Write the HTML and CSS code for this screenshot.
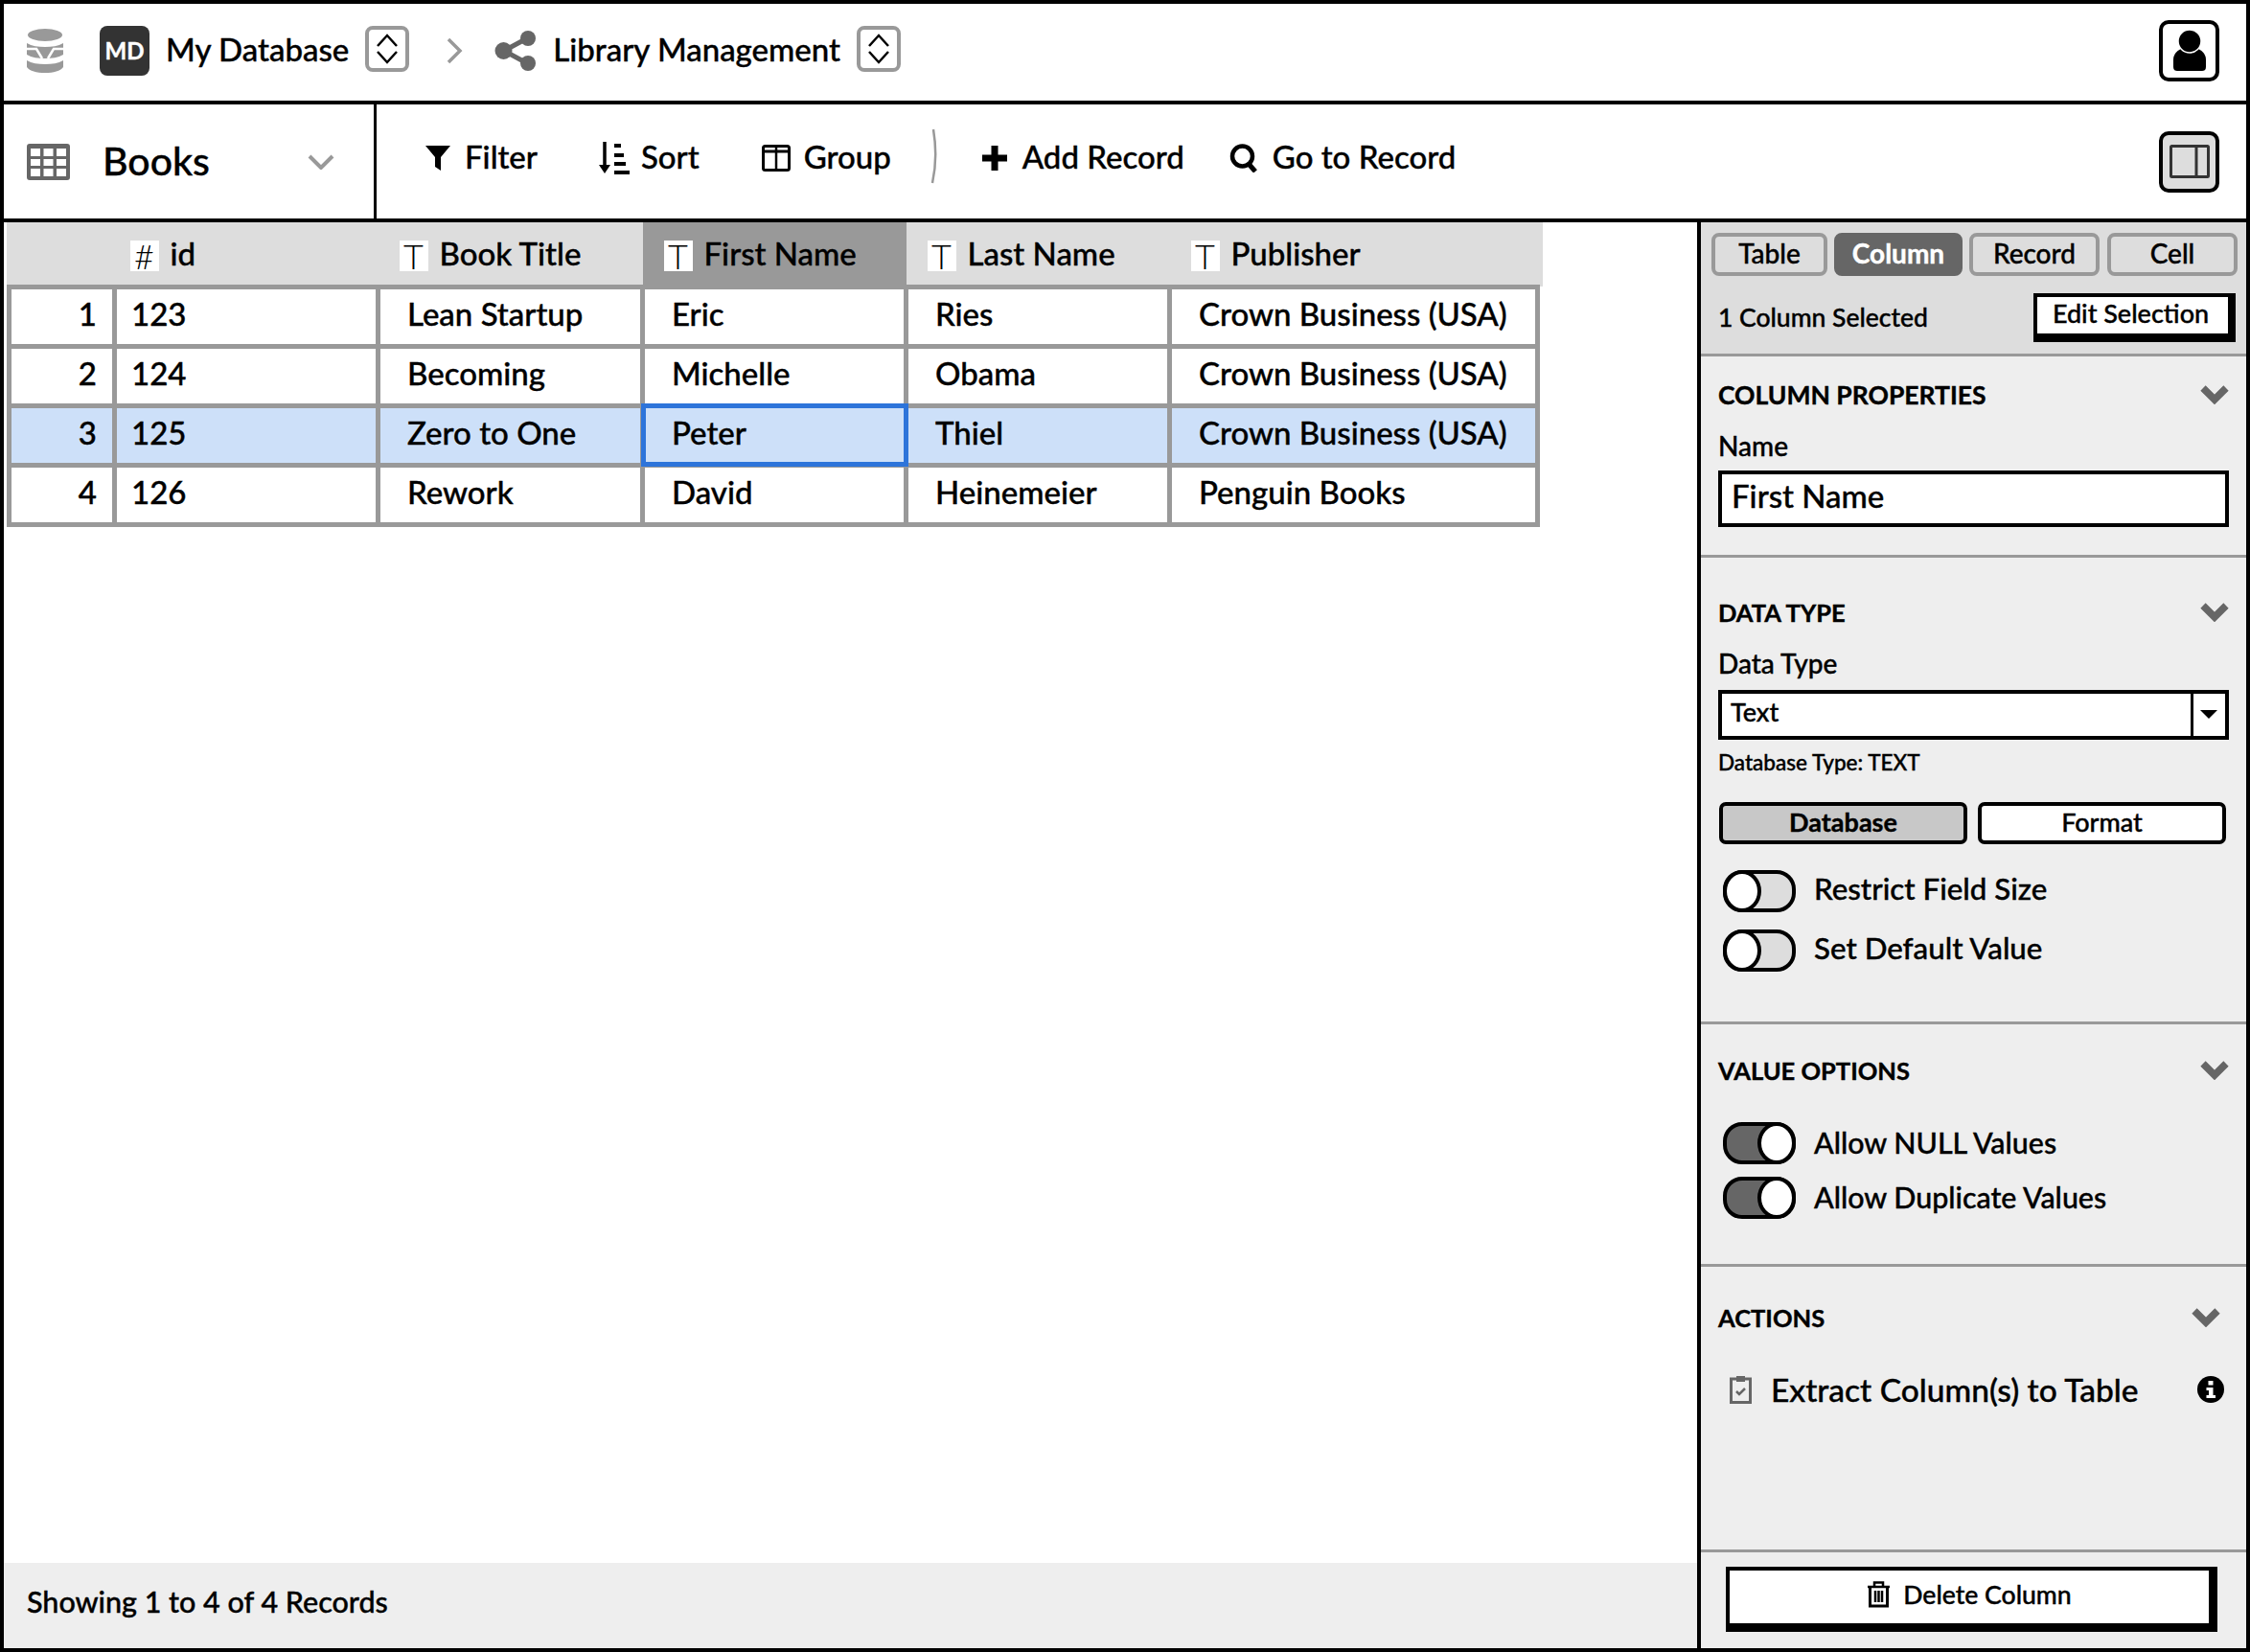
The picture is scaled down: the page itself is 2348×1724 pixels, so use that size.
FILE: index.html
```html
<!DOCTYPE html>
<html lang="en">
<head>
  <meta charset="UTF-8" />
  <title>Library Management - Books</title>
  <link rel="stylesheet" href="styles.css">
</head>
<body>
<div class="app">

  <header class="topbar">
    <svg class="db-icon" viewBox="0 0 38 46" width="38" height="46">
      <ellipse cx="19" cy="6.500" rx="18" ry="6.500" fill="#999"/>
      <path d="M0 15c5 3 12 4 19 4s14-1 19-4v12c-5 3-12 4-19 4S5 30 0 27z" fill="#999"/>
      <path d="M0 21h10l6 10M38 21H28l-6 10" fill="none" stroke="#fff" stroke-width="2.500"/>
      <path d="M0 33c5 3 12 4 19 4s14-1 19-4v7c-3 4-10 6-19 6S3 44 0 40z" fill="#999"/>
    </svg>
    <div class="db-badge">MD</div>
    <span class="crumb">My Database</span>
    <div class="stepper">
      <svg viewBox="0 0 24 34" width="24" height="34"><path d="M2 14L12 3l10 11M2 20l10 11 10-11" fill="none" stroke="#000" stroke-width="2.500"/></svg>
    </div>
    <svg class="crumb-sep" viewBox="0 0 18 28" width="18" height="28"><path d="M3 2l12 12-12 12" fill="none" stroke="#999" stroke-width="3.500"/></svg>
    <svg class="share-icon" viewBox="0 0 44 42" width="44" height="42">
      <path d="M10 21L34 8M10 21l24 13" stroke="#666" stroke-width="5" fill="none"/>
      <circle cx="9.500" cy="21" r="9" fill="#666"/>
      <circle cx="35" cy="8" r="8" fill="#666"/>
      <circle cx="35" cy="34" r="8" fill="#666"/>
    </svg>
    <span class="crumb">Library Management</span>
    <div class="stepper">
      <svg viewBox="0 0 24 34" width="24" height="34"><path d="M2 14L12 3l10 11M2 20l10 11 10-11" fill="none" stroke="#000" stroke-width="2.500"/></svg>
    </div>
    <button class="square-btn user-btn">
      <svg viewBox="0 0 36 44" width="36" height="44">
        <path d="M1 39v-8c0-6 5-10 10-12h14c5 2 10 6 10 12v8c0 3-2 4-4 4H5c-2 0-4-1-4-4z" fill="#000"/>
        <circle cx="18" cy="12" r="12" fill="#000" stroke="#fff" stroke-width="1.500"/>
      </svg>
    </button>
  </header>

  <div class="toolbar">
    <div class="table-picker">
      <svg class="grid-icon" viewBox="0 0 45 38" width="45" height="38">
        <rect width="45" height="38" rx="3" fill="#666"/>
        <g fill="#fff">
          <rect x="4" y="5" width="10" height="8"/><rect x="17.500" y="5" width="10" height="8"/><rect x="31" y="5" width="10" height="8"/>
          <rect x="4" y="16" width="10" height="7"/><rect x="17.500" y="16" width="10" height="7"/><rect x="31" y="16" width="10" height="7"/>
          <rect x="4" y="26" width="10" height="8"/><rect x="17.500" y="26" width="10" height="8"/><rect x="31" y="26" width="10" height="8"/>
        </g>
      </svg>
      <span class="table-name">Books</span>
      <svg class="picker-arrow" viewBox="0 0 28 16" width="28" height="16"><path d="M2 2l12 12L26 2" fill="none" stroke="#999" stroke-width="4"/></svg>
    </div>
    <div class="actions">
      <a class="action action-filter">
        <svg viewBox="0 0 26 27" width="26" height="27"><path d="M0 1h26L16 13v14l-6-4V13z" fill="#000"/></svg>
        Filter
      </a>
      <a class="action action-sort">
        <svg viewBox="0 0 32 34" width="32" height="34">
          <path d="M6 0v29" stroke="#000" stroke-width="3.500" fill="none"/>
          <path d="M0 24h12l-6 9z" fill="#000"/>
          <path d="M16 2h7v4h-7zM16 12h10v4H16zM16 21h12v4H16zM16 30h16v4H16z" fill="#000"/>
        </svg>
        Sort
      </a>
      <a class="action action-group">
        <svg viewBox="0 0 30 28" width="30" height="28">
          <rect x="1.500" y="1.500" width="27" height="25" rx="2" fill="none" stroke="#000" stroke-width="3"/>
          <path d="M1 7h28" stroke="#000" stroke-width="3"/>
          <path d="M15 2v25" stroke="#000" stroke-width="2.500"/>
        </svg>
        Group
      </a>
      <svg class="action-sep" viewBox="0 0 8 58" width="8" height="58"><path d="M3 1c3 18 3 38-1 56" stroke="#999" stroke-width="2.500" fill="none"/></svg>
      <a class="action action-add">
        <svg viewBox="0 0 26 26" width="26" height="26"><path d="M9.500 0h7v9.500H26v7h-9.500V26h-7v-9.500H0v-7h9.500z" fill="#000"/></svg>
        Add Record
      </a>
      <a class="action action-goto">
        <svg viewBox="0 0 31 30" width="31" height="30"><circle cx="13.500" cy="13" r="10.500" fill="none" stroke="#000" stroke-width="4.500"/><path d="M20 21l7 8" stroke="#000" stroke-width="5"/></svg>
        Go to Record
      </a>
    </div>
    <button class="square-btn panel-btn">
      <svg viewBox="0 0 42 35" width="42" height="35">
        <rect x="1.500" y="1.500" width="39" height="32" rx="1" fill="none" stroke="#333" stroke-width="3"/>
        <path d="M28 2v31" stroke="#333" stroke-width="3"/>
      </svg>
    </button>
  </div>

  <div class="main">
    <section class="grid-pane">
      <div class="grid-scroll">
        <table class="records">
          <colgroup>
            <col class="col-num"><col class="col-id"><col class="col-title"><col class="col-first"><col class="col-last"><col class="col-pub">
          </colgroup>
          <thead>
            <tr>
              <th></th>
              <th class="th-id"><span class="type-badge">#</span>id</th>
              <th><span class="type-badge">T</span>Book Title</th>
              <th class="th-active"><span class="type-badge">T</span>First Name</th>
              <th><span class="type-badge">T</span>Last Name</th>
              <th><span class="type-badge">T</span>Publisher</th>
            </tr>
          </thead>
          <tbody>
            <tr>
              <td class="num">1</td><td class="id">123</td><td>Lean Startup</td><td>Eric</td><td>Ries</td><td>Crown Business (USA)</td>
            </tr>
            <tr>
              <td class="num">2</td><td class="id">124</td><td>Becoming</td><td>Michelle</td><td>Obama</td><td>Crown Business (USA)</td>
            </tr>
            <tr class="row-selected">
              <td class="num">3</td><td class="id">125</td><td>Zero to One</td><td class="cell-active">Peter</td><td>Thiel</td><td>Crown Business (USA)</td>
            </tr>
            <tr>
              <td class="num">4</td><td class="id">126</td><td>Rework</td><td>David</td><td>Heinemeier</td><td>Penguin Books</td>
            </tr>
          </tbody>
        </table>
      </div>
      <footer class="statusbar">Showing 1 to 4 of 4 Records</footer>
    </section>

    <aside class="side">
      <div class="side-head">
        <div class="tabs">
          <button class="tab tab-table">Table</button>
          <button class="tab tab-column active">Column</button>
          <button class="tab tab-record">Record</button>
          <button class="tab tab-cell">Cell</button>
        </div>
        <div class="selection">
          <span class="selection-count">1 Column Selected</span>
          <button class="edit-btn">Edit Selection</button>
        </div>
      </div>

      <div class="section sec-props">
        <div class="sec-title">COLUMN PROPERTIES
          <svg class="chevron" viewBox="0 0 30 20" width="30" height="20"><path d="M3 3l12 12L27 3" fill="none" stroke="#666" stroke-width="7.500"/></svg>
        </div>
        <label class="field-label">Name</label>
        <div class="name-input">First Name</div>
      </div>

      <div class="section sec-type">
        <div class="sec-title">DATA TYPE
          <svg class="chevron" viewBox="0 0 30 20" width="30" height="20"><path d="M3 3l12 12L27 3" fill="none" stroke="#666" stroke-width="7.500"/></svg>
        </div>
        <label class="field-label">Data Type</label>
        <div class="select-box">
          <span class="select-value">Text</span>
          <span class="select-arrow"></span>
        </div>
        <div class="hint">Database Type: TEXT</div>
        <div class="seg">
          <button class="seg-btn on">Database</button>
          <button class="seg-btn">Format</button>
        </div>
        <div class="switch-row"><span class="switch"></span>Restrict Field Size</div>
        <div class="switch-row"><span class="switch"></span>Set Default Value</div>
      </div>

      <div class="section sec-values">
        <div class="sec-title">VALUE OPTIONS
          <svg class="chevron" viewBox="0 0 30 20" width="30" height="20"><path d="M3 3l12 12L27 3" fill="none" stroke="#666" stroke-width="7.500"/></svg>
        </div>
        <div class="switch-row tight"><span class="switch on"></span>Allow NULL Values</div>
        <div class="switch-row tight"><span class="switch on"></span>Allow Duplicate Values</div>
      </div>

      <div class="section sec-actions">
        <div class="sec-title">ACTIONS
          <svg class="chevron chevron-left" viewBox="0 0 30 20" width="30" height="20"><path d="M3 3l12 12L27 3" fill="none" stroke="#666" stroke-width="7.500"/></svg>
        </div>
        <div class="extract">
          <svg viewBox="0 0 23 30" width="23" height="30">
            <rect x="1.500" y="4" width="20" height="24.500" fill="none" stroke="#666" stroke-width="3"/>
            <rect x="7" y="1" width="9" height="6" fill="#666"/>
            <path d="M7 17l3 3 6-6" fill="none" stroke="#666" stroke-width="2.500"/>
          </svg>
          <span>Extract Column(s) to Table</span>
          <svg class="info-icon" viewBox="0 0 28 28" width="28" height="28">
            <circle cx="14" cy="14" r="14" fill="#000"/>
            <rect x="11.500" y="5" width="5" height="4.500" fill="#fff"/>
            <path d="M9.500 12h7v8h2.500v3h-9.500v-3h2.500v-5h-2.500z" fill="#fff"/>
          </svg>
        </div>
      </div>

      <div class="side-foot">
        <button class="delete-btn">
          <svg viewBox="0 0 25 28" width="25" height="28">
            <path d="M1 6h23M8 5V1.500h9V5" fill="none" stroke="#000" stroke-width="2.500"/>
            <path d="M3.500 6v20h18V6" fill="none" stroke="#000" stroke-width="3"/>
            <path d="M9 10v12M12.500 10v12M16 10v12" stroke="#000" stroke-width="2.500"/>
          </svg>
          Delete Column
        </button>
      </div>
    </aside>
  </div>

</div>
</body>
</html>
```

FILE: styles.css
```css
* {
  box-sizing: border-box;
}

html,
body {
  margin: 0;
  background-color: #fff;
}

body {
  font-family: "Lato", "Liberation Sans", sans-serif;
  font-weight: 500;
  color: #000;
  -webkit-text-stroke: 0.4px currentColor;
}

button {
  font-family: inherit;
  font-weight: inherit;
  color: inherit;
  cursor: pointer;
}

.app {
  width: 2348px;
  height: 1724px;
  border: 4px solid #000;
  display: flex;
  flex-direction: column;
}

/* top bar */
.topbar {
  height: 105px;
  flex: none;
  display: flex;
  align-items: center;
  padding: 0 0 4px 24px;
  border-bottom: 4px solid #000;
}

.db-icon {
  margin-right: 38px;
}

.db-badge {
  width: 52px;
  height: 52px;
  background-color: #333;
  border-radius: 8px;
  color: #fff;
  font-size: 24px;
  font-weight: bold;
  display: flex;
  align-items: center;
  justify-content: center;
  margin-right: 17px;
}

.crumb {
  font-size: 33px;
  white-space: nowrap;
  margin-bottom: 4px;
}

.stepper {
  width: 46px;
  height: 48px;
  border: 4px solid #999;
  border-radius: 8px;
  display: flex;
  align-items: center;
  justify-content: center;
  margin-left: 17px;
  margin-bottom: 4px;
}

.crumb-sep {
  margin-left: 38px;
  margin-right: 33px;
}

.share-icon {
  margin-right: 17px;
}

.square-btn {
  width: 63px;
  height: 64px;
  padding: 0;
  border: 4px solid #000;
  border-radius: 10px;
  display: flex;
  align-items: center;
  justify-content: center;
  margin-left: auto;
  margin-right: 28px;
  background-color: #fff;
}

/* toolbar */
.toolbar {
  height: 123px;
  flex: none;
  display: flex;
  align-items: center;
  border-bottom: 4px solid #000;
}

.table-picker {
  width: 389px;
  height: 100%;
  flex: none;
  display: flex;
  align-items: center;
  padding-left: 24px;
  border-right: 3px solid #000;
}

.table-name {
  font-size: 41px;
  margin-left: 34px;
  margin-bottom: 3px;
}

.picker-arrow {
  margin-left: auto;
  margin-right: 41px;
}

.actions {
  display: flex;
  align-items: center;
  height: 100%;
  padding-left: 51px;
  padding-bottom: 12px;
}

.action {
  display: flex;
  align-items: center;
  font-size: 33px;
  white-space: nowrap;
}

.action svg {
  margin-top: 4px;
  margin-right: 15px;
}

.action-sort {
  margin-left: 64px;
}

.action-sort svg {
  margin-right: 12px;
}

.action-group {
  margin-left: 65px;
}

.action-group svg {
  margin-right: 14px;
}

.action-sep {
  margin-left: 41px;
  margin-right: 46px;
}

.action-add svg {
  margin-right: 16px;
}

.action-goto {
  margin-left: 47px;
}

.action-goto svg {
  margin-right: 14px;
}

.panel-btn {
  background-color: #ddd;
}

/* table */
.main {
  flex: 1;
  display: flex;
  min-height: 0;
}

.grid-pane {
  flex: 1;
  display: flex;
  flex-direction: column;
  min-width: 0;
}

.grid-scroll {
  flex: 1;
}

.records {
  table-layout: fixed;
  border-collapse: collapse;
  width: 1595px;
  margin-left: 3px;
  font-size: 33px;
}

.col-num { width: 110px; }
.col-id { width: 275px; }
.col-title { width: 276px; }
.col-first { width: 275px; }
.col-last { width: 275px; }
.col-pub { width: 384px; }

.records th {
  height: 67px;
  padding: 2px 0 0 22px;
  background-color: #ddd;
  font-weight: 500;
  text-align: left;
  white-space: nowrap;
}

.records th:first-child {
  box-shadow: -3px 0 0 #ddd;
}

.records th:last-child {
  box-shadow: 5px 0 0 #ddd;
}

.records th.th-id {
  padding-left: 16px;
}

.records th.th-active {
  background-color: #999;
}

.type-badge {
  display: inline-block;
  width: 30px;
  height: 32px;
  margin-right: 12px;
  margin-bottom: 4px;
  background-color: #fff;
  text-align: center;
  font-size: 36px;
  line-height: 33px;
  font-weight: 300;
  -webkit-text-stroke: 0;
  vertical-align: middle;
}

.records td {
  height: 62px;
  padding: 0 0 6px 28px;
  border: 5px solid #999;
  white-space: nowrap;
}

.records td.num {
  padding: 0 16px 6px 0;
  text-align: right;
}

.records td.id {
  padding-left: 15px;
}

.row-selected td {
  background-color: #cde0f9;
}

.records td.cell-active {
  outline: 5px solid #2d74da;
  outline-offset: -3px;
}

.statusbar {
  height: 89px;
  flex: none;
  display: flex;
  align-items: center;
  padding: 0 0 10px 24px;
  background-color: #eee;
  font-size: 30.500px;
}

/* side panel */
.side {
  width: 573px;
  flex: none;
  display: flex;
  flex-direction: column;
  background-color: #eee;
  border-left: 4px solid #000;
  font-size: 30px;
}

.side-head {
  height: 140px;
  flex: none;
  padding: 11px 11px 0 11px;
  background-color: #ddd;
  border-bottom: 3px solid #999;
}

.tabs {
  display: flex;
  gap: 7px;
}

.tab {
  height: 45px;
  flex: none;
  padding: 0 0 7px;
  border: 4px solid #999;
  border-radius: 8px;
  background-color: #ddd;
  font-size: 28px;
}

.tab-table { width: 121px; }
.tab-column { width: 134px; }
.tab-record { width: 136px; }
.tab-cell { width: 136px; margin-left: 1px; }

.tab.active {
  background-color: #666;
  border-color: #666;
  color: #fff;
  font-weight: bold;
}

.selection {
  display: flex;
  align-items: center;
  justify-content: space-between;
  margin-top: 18px;
  padding-left: 7px;
}

.selection-count {
  font-size: 26.500px;
  margin-bottom: 2px;
}

.edit-btn {
  width: 211px;
  height: 51px;
  padding: 0 4px 5px 0;
  border: 4px solid #000;
  border-right-width: 8px;
  border-bottom-width: 9px;
  background-color: #fff;
  font-size: 27px;
}

.section {
  flex: none;
  padding: 0 18px 0 18px;
  border-bottom: 3px solid #999;
}

.sec-props { height: 210px; }
.sec-type { height: 487px; }
.sec-values { height: 253px; }

.sec-actions {
  flex: 1;
}

.sec-title {
  display: flex;
  align-items: center;
  justify-content: space-between;
  height: 36px;
  margin-top: 22px;
  font-size: 25.500px;
  font-weight: bold;
}

.sec-props .sec-title { font-size: 26.500px; }
.sec-type .sec-title { margin-top: 39px; }
.sec-values .sec-title { margin-top: 30px; }
.sec-actions .sec-title { margin-top: 35px; }

.sec-title .chevron {
  margin-right: 0;
}

.sec-title .chevron-left {
  margin-right: 9px;
}

.field-label {
  display: block;
  margin-top: 17px;
  font-size: 28px;
  line-height: 36px;
}

.name-input {
  height: 59px;
  margin-top: 8px;
  padding-left: 10px;
  border: 4px solid #000;
  background-color: #fff;
  font-size: 33px;
  line-height: 45px;
}

.select-box {
  display: flex;
  height: 52px;
  margin-top: 10px;
  border: 4px solid #000;
  background-color: #fff;
  font-size: 27px;
}

.select-value {
  flex: 1;
  padding-left: 9px;
  line-height: 38px;
  border-right: 3px solid #000;
}

.select-arrow {
  width: 33px;
  position: relative;
}

.select-arrow::after {
  content: "";
  position: absolute;
  left: 7px;
  top: 17px;
  border-left: 9px solid transparent;
  border-right: 9px solid transparent;
  border-top: 9px solid #000;
}

.hint {
  margin-top: 8px;
  font-size: 22.500px;
  line-height: 32px;
}

.seg {
  display: flex;
  gap: 11px;
  margin-top: 25px;
  padding-left: 1px;
}

.seg-btn {
  width: 259px;
  height: 44px;
  padding: 0 0 8px;
  border: 4px solid #000;
  border-radius: 7px;
  background-color: #fff;
  font-size: 27px;
}

.seg-btn.on {
  background-color: #c8c8c8;
  font-weight: bold;
}

.switch-row {
  display: flex;
  align-items: center;
  height: 44px;
  margin-top: 27px;
  padding-left: 5px;
  padding-bottom: 6px;
  font-size: 31.300px;
}

.switch-row + .switch-row {
  margin-top: 18px;
}

.switch-row.tight {
  margin-top: 36px;
  padding-bottom: 2px;
  font-size: 30.400px;
}

.switch-row.tight + .switch-row.tight {
  margin-top: 13px;
}

.switch {
  position: relative;
  width: 76px;
  height: 44px;
  flex: none;
  margin-top: 6px;
  margin-right: 19px;
  border: 4px solid #000;
  border-radius: 20px;
  background-color: #ddd;
}

.tight .switch {
  margin-top: 2px;
}

.switch::after {
  content: "";
  box-sizing: border-box;
  position: absolute;
  left: -4px;
  top: -4px;
  width: 40px;
  height: 44px;
  border: 4px solid #000;
  border-radius: 50%;
  background-color: #fff;
}

.switch.on {
  background-color: #666;
}

.switch.on::after {
  left: auto;
  right: -4px;
}

.extract {
  display: flex;
  align-items: center;
  height: 40px;
  margin-top: 37px;
  padding-left: 12px;
  font-size: 33.500px;
}

.extract span {
  margin-left: 20px;
}

.info-icon {
  margin-left: auto;
  margin-right: 5px;
}

.side-foot {
  height: 100px;
  flex: none;
  padding: 15px 0 0 26px;
}

.delete-btn {
  width: 513px;
  height: 68px;
  display: flex;
  align-items: center;
  justify-content: center;
  gap: 13px;
  padding: 0 0 5px;
  border: 4px solid #000;
  border-right-width: 9px;
  border-bottom-width: 9px;
  background-color: #fff;
  font-size: 26.600px;
}
```
